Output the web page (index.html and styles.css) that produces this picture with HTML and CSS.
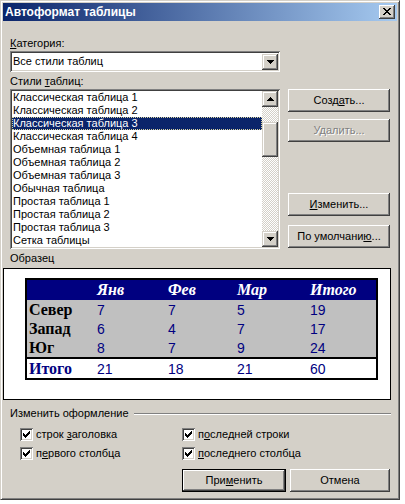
FILE: index.html
```html
<!DOCTYPE html>
<html lang="ru">
<head>
<meta charset="utf-8">
<title>Автоформат таблицы</title>
<link rel="stylesheet" href="styles.css">
</head>
<body>
<div class="window">
  <div class="titlebar">
    <span class="title">Автоформат таблицы</span>
    <span class="close"><svg width="8" height="7" viewBox="0 0 8 7"><path d="M0 0h2v1H0zM6 0h2v1H6zM1 1h2v1H1zM5 1h2v1H5zM2 2h4v1H2zM3 3h2v1H3zM2 4h4v1H2zM1 5h2v1H1zM5 5h2v1H5zM0 6h2v1H0zM6 6h2v1H6z"/></svg></span>
  </div>
  <div class="content">
    <div class="top">
      <div class="lbl"><u>К</u>атегория:</div>
      <div class="combo">
        <span class="combo-text">Все стили таблиц</span>
        <span class="arrow-btn"><svg width="7" height="4" viewBox="0 0 7 4"><path d="M0 0h7v1H0zM1 1h5v1H1zM2 2h3v1H2zM3 3h1v1H3z"/></svg></span>
      </div>
      <div class="lbl lbl2">Стили <u>т</u>аблиц:</div>
      <div class="listbox">
        <ul class="items">
          <li>Классическая таблица 1</li>
          <li>Классическая таблица 2</li>
          <li class="sel">Классическая таблица 3</li>
          <li>Классическая таблица 4</li>
          <li>Объемная таблица 1</li>
          <li>Объемная таблица 2</li>
          <li>Объемная таблица 3</li>
          <li>Обычная таблица</li>
          <li>Простая таблица 1</li>
          <li>Простая таблица 2</li>
          <li>Простая таблица 3</li>
          <li>Сетка таблицы</li>
        </ul>
        <div class="scrollbar">
          <span class="arrow-btn"><svg width="7" height="4" viewBox="0 0 7 4"><path d="M3 0h1v1H3zM2 1h3v1H2zM1 2h5v1H1zM0 3h7v1H0z"/></svg></span>
          <div class="track"><span class="thumb"></span></div>
          <span class="arrow-btn"><svg width="7" height="4" viewBox="0 0 7 4"><path d="M0 0h7v1H0zM1 1h5v1H1zM2 2h3v1H2zM3 3h1v1H3z"/></svg></span>
        </div>
      </div>
      <div class="side">
        <span class="btn"><span>Созд<u>а</u>ть...</span></span>
        <span class="btn disabled"><span>Удалить...</span></span>
        <span class="btn btn-edit"><span><u>И</u>зменить...</span></span>
        <span class="btn btn-default-style"><span>По умолчани<u>ю</u>...</span></span>
      </div>
    </div>

    <div class="lbl sample-lbl">Образец</div>
    <div class="preview">
      <table class="sample">
        <colgroup><col class="c1"><col class="c2"><col class="c3"><col class="c4"><col class="c5"></colgroup>
        <tr class="head"><th></th><th>Янв</th><th>Фев</th><th>Мар</th><th>Итого</th></tr>
        <tr class="data"><th>Север</th><td>7</td><td>7</td><td>5</td><td>19</td></tr>
        <tr class="data"><th>Запад</th><td>6</td><td>4</td><td>7</td><td>17</td></tr>
        <tr class="data"><th>Юг</th><td>8</td><td>7</td><td>9</td><td>24</td></tr>
        <tr class="total"><th>Итого</th><td>21</td><td>18</td><td>21</td><td>60</td></tr>
      </table>
    </div>

    <div class="group-title"><span>Изменить оформление</span><span class="etch"></span></div>
    <div class="checks">
      <label class="chk"><span class="box"><svg width="7" height="7" viewBox="0 0 7 7"><path d="M6 0h1v1H6zM5 1h2v1H5zM0 2h1v1H0zM4 2h3v1H4zM0 3h2v1H0zM3 3h3v1H3zM0 4h5v1H0zM1 5h3v1H1zM2 6h1v1H2z"/></svg></span><span class="chk-text">строк <u>з</u>аголовка</span></label>
      <label class="chk"><span class="box"><svg width="7" height="7" viewBox="0 0 7 7"><path d="M6 0h1v1H6zM5 1h2v1H5zM0 2h1v1H0zM4 2h3v1H4zM0 3h2v1H0zM3 3h3v1H3zM0 4h5v1H0zM1 5h3v1H1zM2 6h1v1H2z"/></svg></span><span class="chk-text">п<u>о</u>следней строки</span></label>
      <label class="chk"><span class="box"><svg width="7" height="7" viewBox="0 0 7 7"><path d="M6 0h1v1H6zM5 1h2v1H5zM0 2h1v1H0zM4 2h3v1H4zM0 3h2v1H0zM3 3h3v1H3zM0 4h5v1H0zM1 5h3v1H1zM2 6h1v1H2z"/></svg></span><span class="chk-text">п<u>е</u>рвого столбца</span></label>
      <label class="chk"><span class="box"><svg width="7" height="7" viewBox="0 0 7 7"><path d="M6 0h1v1H6zM5 1h2v1H5zM0 2h1v1H0zM4 2h3v1H4zM0 3h2v1H0zM3 3h3v1H3zM0 4h5v1H0zM1 5h3v1H1zM2 6h1v1H2z"/></svg></span><span class="chk-text"><u>п</u>оследнего столбца</span></label>
    </div>

    <div class="actions">
      <span class="btn btn-primary"><span>При<u>м</u>енить</span></span>
      <span class="btn btn-cancel"><span>Отмена</span></span>
    </div>
  </div>
</div>
</body>
</html>
```

FILE: styles.css
```css
* { box-sizing: border-box; }

body {
  margin: 0;
  background: #fff;
  font-family: "Liberation Sans", Arial, sans-serif;
  font-size: 11px;
  color: #000;
}

u { text-decoration: underline; text-underline-offset: 1px; }

.window {
  width: 400px;
  height: 500px;
  background: #d4d0c8;
  border: 1px solid;
  border-color: #d4d0c8 #404040 #404040 #d4d0c8;
  box-shadow: inset 1px 1px #fff, inset -1px -1px #808080;
  padding: 2px;
  display: flex;
  flex-direction: column;
}

.titlebar {
  height: 18px;
  flex: none;
  background: linear-gradient(to right, #0a246a, #a6caf0);
  display: flex;
  align-items: center;
  justify-content: space-between;
  padding: 0 2px 0 2px;
}

.title {
  color: #fff;
  font-weight: bold;
  font-size: 12px;
  line-height: 14px;
}

.close {
  width: 16px;
  height: 14px;
  background: #d4d0c8;
  box-shadow: inset -1px -1px #404040, inset 1px 1px #fff, inset -2px -2px #808080, inset 2px 2px #d4d0c8;
  display: flex;
  align-items: center;
  justify-content: center;
  padding: 0 1px 1px 0;
}

.content {
  padding: 16px 7px 0 7px;
  display: flex;
  flex-direction: column;
}

.lbl { line-height: 13px; height: 13px; white-space: nowrap; }

.top {
  display: grid;
  grid-template-columns: 270px 102px;
  column-gap: 8px;
}

.top > .lbl, .top > .combo, .top > .listbox { grid-column: 1; }
.lbl2 { margin-top: 3px; }

.combo {
  margin-top: 1px;
  height: 21px;
  background: #fff;
  box-shadow: inset 1px 1px #808080, inset -1px -1px #fff, inset 2px 2px #404040, inset -2px -2px #d4d0c8;
  display: flex;
  align-items: center;
  padding: 2px;
}

.combo-text { flex: 1; padding-left: 1px; line-height: 13px; }

.arrow-btn {
  width: 16px;
  height: 16px;
  flex: none;
  background: #d4d0c8;
  box-shadow: inset -1px -1px #404040, inset 1px 1px #d4d0c8, inset -2px -2px #808080, inset 2px 2px #fff;
  display: flex;
  align-items: center;
  justify-content: center;
}

.combo .arrow-btn svg { margin-top: 1px; }

.listbox {
  margin-top: 1px;
  height: 160px;
  background: #fff;
  box-shadow: inset 1px 1px #808080, inset -1px -1px #fff, inset 2px 2px #404040, inset -2px -2px #d4d0c8;
  padding: 2px;
  display: flex;
}

.items {
  list-style: none;
  margin: 0;
  padding: 0;
  flex: 1;
}

.items li {
  height: 13px;
  line-height: 13px;
  padding-left: 1px;
  white-space: nowrap;
}

.items li.sel {
  background: #0a246a;
  color: #fff;
  outline: 1px dotted #d8d4a0;
  outline-offset: -1px;
}

.scrollbar {
  width: 16px;
  display: flex;
  flex-direction: column;
}

.track {
  flex: 1;
  background: repeating-conic-gradient(#fff 0 25%, #d4d0c8 0 50%) 0 0 / 2px 2px;
  padding-top: 15px;
}

.thumb {
  display: block;
  height: 35px;
  background: #d4d0c8;
  box-shadow: inset -1px -1px #404040, inset 1px 1px #d4d0c8, inset -2px -2px #808080, inset 2px 2px #fff;
}

.side {
  grid-column: 2;
  grid-row: 4;
  display: flex;
  flex-direction: column;
  margin-top: 1px;
}

.btn {
  display: flex;
  align-items: center;
  justify-content: center;
  height: 23px;
  background: #d4d0c8;
  box-shadow: inset -1px -1px #404040, inset 1px 1px #fff, inset -2px -2px #808080, inset 2px 2px #d4d0c8;
  white-space: nowrap;
  line-height: 13px;
  padding-bottom: 1px;
}

.btn.disabled {
  color: #808080;
  text-shadow: 1px 1px #fff;
  margin-top: 7px;
}

.btn-edit { margin-top: 51px; }
.btn-default-style { margin-top: 9px; }

.sample-lbl { margin-top: 3px; }

.preview {
  margin-top: 3px;
  margin-left: -7px;
  width: 388px;
  height: 132px;
  background: #fff;
  border: 1px solid #000;
  padding: 9px 0 0 21px;
}

.sample {
  border-collapse: separate;
  border-spacing: 0;
  border: 2px solid #000;
  table-layout: fixed;
  width: 353px;
}

.c1 { width: 68px; }
.c2 { width: 71px; }
.c3 { width: 69px; }
.c4 { width: 73px; }
.c5 { width: 68px; }

.sample th, .sample td {
  padding: 0 0 0 2px;
  text-align: left;
  vertical-align: middle;
  white-space: nowrap;
}

.sample th {
  font-family: "Liberation Serif", "Times New Roman", serif;
  font-size: 16px;
  font-weight: bold;
}

.sample td {
  font-family: "Liberation Sans", Arial, sans-serif;
  font-size: 14px;
  color: #000080;
}

.sample .head { background: #000080; height: 20px; }
.sample .head th { color: #fff; font-style: italic; }

.sample .data { background: #c0c0c0; height: 19px; }

.sample .total { background: #fff; height: 21px; }
.sample .total th, .sample .total td { border-top: 2px solid #000; }
.sample .total th { color: #000080; }

.group-title {
  margin-top: 7px;
  display: flex;
  align-items: center;
  line-height: 13px;
  height: 13px;
}

.etch {
  flex: 1;
  height: 2px;
  margin-left: 5px;
  border-top: 1px solid #808080;
  border-bottom: 1px solid #fff;
  margin-right: -1px;
}

.checks {
  margin-top: 8px;
  padding-left: 10px;
  display: grid;
  grid-template-columns: 162px 1fr;
  row-gap: 6px;
}

.chk {
  display: flex;
  align-items: center;
  height: 13px;
  line-height: 13px;
  gap: 3px;
  white-space: nowrap;
}

.box {
  width: 13px;
  height: 13px;
  background: #fff;
  box-shadow: inset 1px 1px #808080, inset -1px -1px #fff, inset 2px 2px #404040, inset -2px -2px #d4d0c8;
  display: flex;
  align-items: center;
  justify-content: center;
  flex: none;
}

.actions {
  margin-top: 9px;
  display: flex;
  justify-content: flex-end;
  gap: 4px;
}

.btn-primary {
  width: 104px;
  border: 1px solid #000;
}

.btn-cancel { width: 100px; }
```
